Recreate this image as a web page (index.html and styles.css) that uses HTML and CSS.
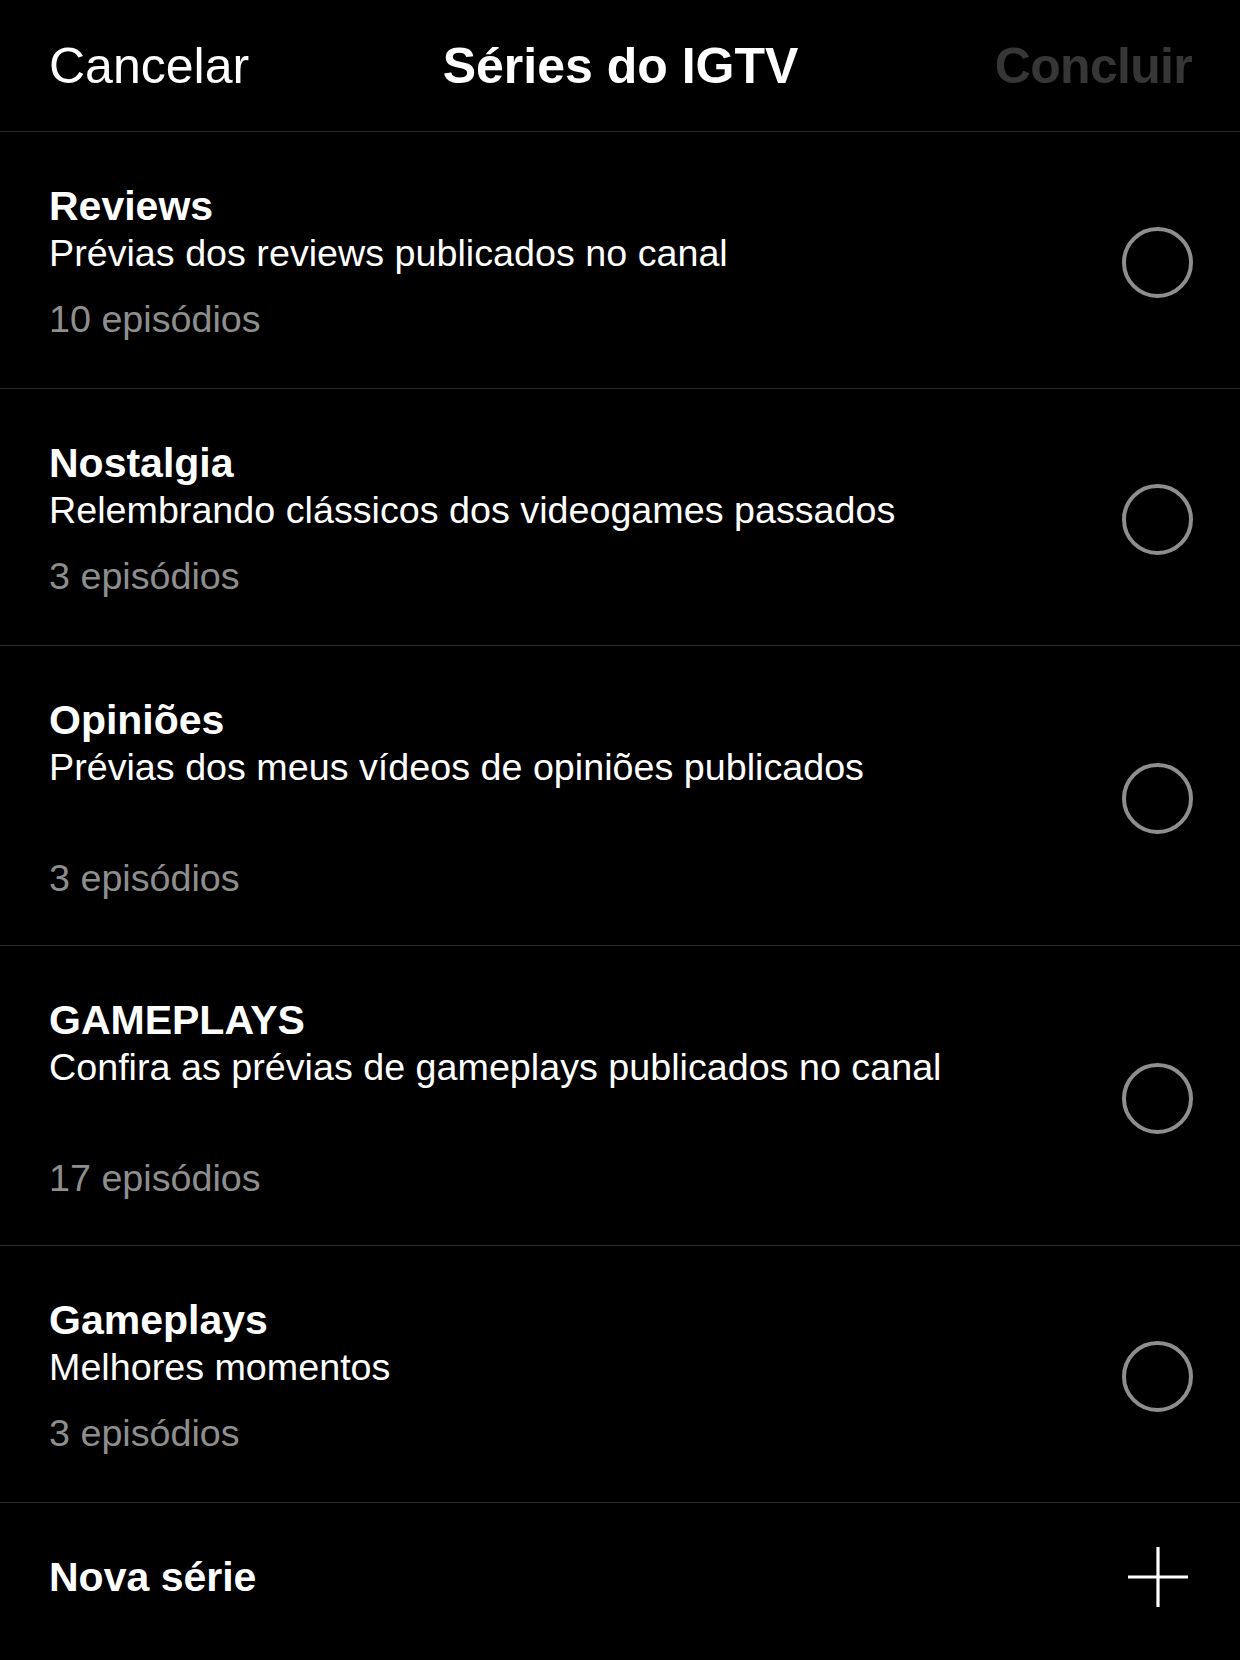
FILE: index.html
```html
<!DOCTYPE html>
<html lang="pt-BR">
<head>
  <meta charset="UTF-8" />
  <title>Séries do IGTV</title>
  <meta name="viewport" content="width=device-width, initial-scale=1.0" />
  <link rel="stylesheet" href="styles.css">
</head>
<body>

  <header class="topbar">
    <a class="topbar-cancel" href="#">Cancelar</a>
    <h1 class="topbar-title">Séries do IGTV</h1>
    <span class="topbar-done">Concluir</span>
  </header>

  <ul class="series-list">
    <li class="serie">
      <div class="serie-info">
        <div class="serie-nome">Reviews</div>
        <div class="serie-desc">Prévias dos reviews publicados no canal</div>
        <div class="serie-eps">10 episódios</div>
      </div>
      <span class="radio"></span>
    </li>
    <li class="serie">
      <div class="serie-info">
        <div class="serie-nome">Nostalgia</div>
        <div class="serie-desc">Relembrando clássicos dos videogames passados</div>
        <div class="serie-eps">3 episódios</div>
      </div>
      <span class="radio"></span>
    </li>
    <li class="serie serie-alta">
      <div class="serie-info">
        <div class="serie-nome">Opiniões</div>
        <div class="serie-desc">Prévias dos meus vídeos de opiniões publicados</div>
        <div class="serie-eps">3 episódios</div>
      </div>
      <span class="radio"></span>
    </li>
    <li class="serie serie-alta">
      <div class="serie-info">
        <div class="serie-nome">GAMEPLAYS</div>
        <div class="serie-desc">Confira as prévias de gameplays publicados no canal</div>
        <div class="serie-eps">17 episódios</div>
      </div>
      <span class="radio"></span>
    </li>
    <li class="serie">
      <div class="serie-info">
        <div class="serie-nome">Gameplays</div>
        <div class="serie-desc">Melhores momentos</div>
        <div class="serie-eps">3 episódios</div>
      </div>
      <span class="radio"></span>
    </li>
  </ul>

  <div class="nova-serie">
    <span class="nova-serie-label">Nova série</span>
    <svg class="nova-serie-plus" width="62" height="62" viewBox="0 0 62 62">
      <path d="M31 1v60M1 31h60" stroke="#fff" stroke-width="3.2" fill="none" />
    </svg>
  </div>

</body>
</html>
```

FILE: styles.css
```css
body {
  margin: 0;
  background: #000;
  color: #fff;
  font-family: "Liberation Sans", Arial, sans-serif;
  min-height: 100vh;
}

.topbar {
  display: grid;
  grid-template-columns: 1fr auto 1fr;
  align-items: center;
  height: 131px;
  padding: 0 48px 0 49px;
  border-bottom: 1px solid #2a2a2a;
  font-size: 50px;
}

.topbar-cancel {
  color: #fff;
  text-decoration: none;
  justify-self: start;
}

.topbar-title {
  margin: 0;
  font-size: 50px;
  font-weight: 700;
}

.topbar-done {
  justify-self: end;
  color: #363636;
  font-weight: 700;
  letter-spacing: -0.7px;
}

.series-list {
  list-style: none;
  margin: 0;
  padding: 0;
}

.serie {
  display: flex;
  align-items: center;
  justify-content: space-between;
  padding: 50px 47px 46px 49px;
  border-bottom: 1px solid #2a2a2a;
}

.serie-nome {
  font-size: 41px;
  font-weight: 700;
  line-height: 48px;
}

.serie-desc {
  font-size: 37.7px;
  line-height: 46px;
}

.serie-eps {
  margin-top: 20px;
  font-size: 37.7px;
  line-height: 46px;
  color: #8e8e8e;
}

.serie-alta .serie-eps {
  margin-top: 65px;
}

.serie-alta {
  padding-bottom: 44px;
}

.radio {
  width: 63px;
  height: 63px;
  border: 4px solid #8e8e8e;
  border-radius: 50%;
  flex-shrink: 0;
}

.nova-serie {
  display: flex;
  align-items: center;
  justify-content: space-between;
  padding: 43px 51px 0 49px;
  height: 62px;
}

.nova-serie-label {
  font-size: 41px;
  font-weight: 700;
}
```
